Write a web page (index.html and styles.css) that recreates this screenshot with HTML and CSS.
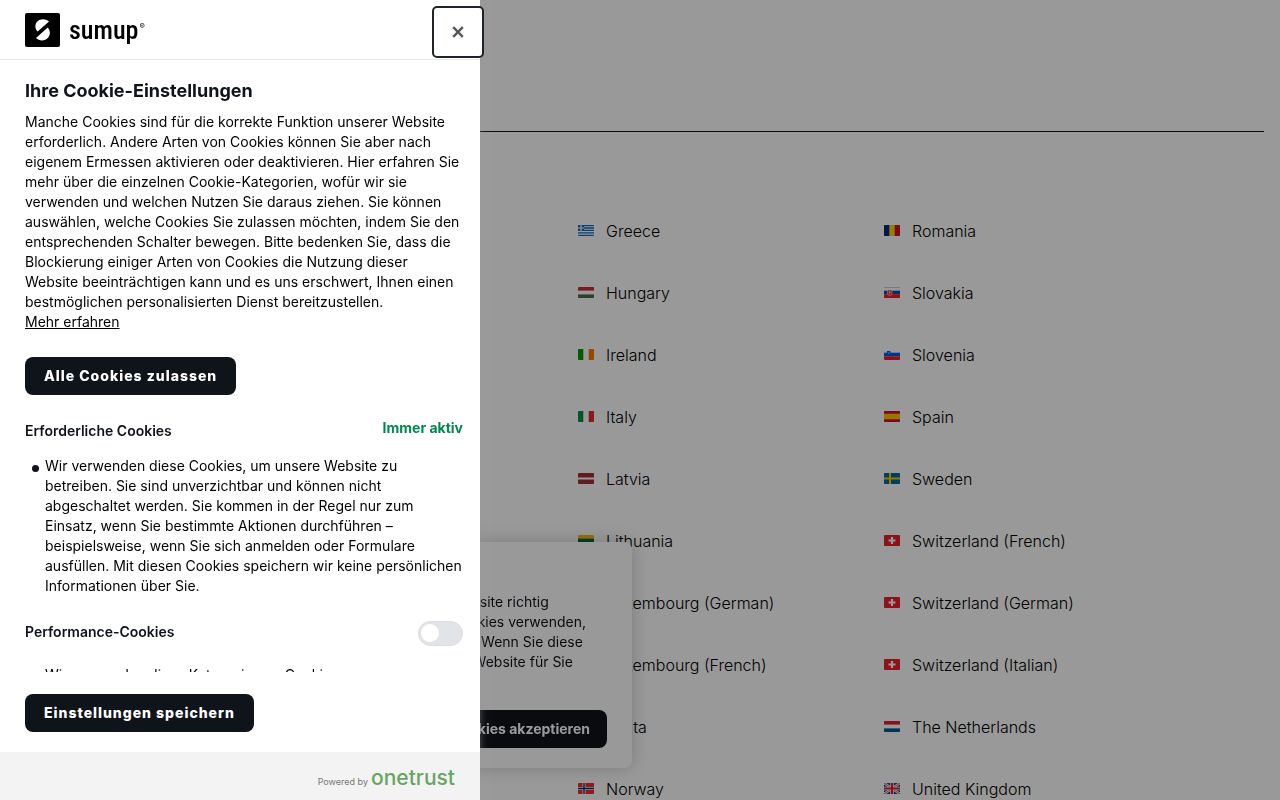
FILE: index.html
```html
<!DOCTYPE html>
<html lang="de">
<head>
    <meta charset="UTF-8">
    <meta name="viewport" content="width=device-width, initial-scale=1.0">
    <title>SumUp</title>
    <link rel="stylesheet" href="styles.css">
</head>
<body>
    <main class="page">
        <hr class="rule">
        <div class="countries">
            <ul class="country-list">
                <li><a href="#"><svg class="flag" viewBox="0 0 16 11"><rect width="16" height="11" fill="#fff"/><path d="M0 .6h16M0 3h16M0 5.4h16M0 7.8h16M0 10.3h16" stroke="#0d6ebf" stroke-width="1.3"/><rect width="6" height="6" fill="#0d6ebf"/><path d="M3 0v6M0 3h6" stroke="#fff" stroke-width="1.2"/></svg>Greece</a></li>
                <li><a href="#"><svg class="flag" viewBox="0 0 16 11"><rect width="16" height="11" fill="#fff"/><rect width="16" height="3.6" fill="#cd2a3e"/><rect y="7.4" width="16" height="3.6" fill="#436f4d"/></svg>Hungary</a></li>
                <li><a href="#"><svg class="flag" viewBox="0 0 16 11"><rect width="16" height="11" fill="#fff"/><rect width="5.3" height="11" fill="#009a00"/><rect x="10.7" width="5.3" height="11" fill="#ff7900"/></svg>Ireland</a></li>
                <li><a href="#"><svg class="flag" viewBox="0 0 16 11"><rect width="16" height="11" fill="#fff"/><rect width="5.3" height="11" fill="#009246"/><rect x="10.7" width="5.3" height="11" fill="#e02b37"/></svg>Italy</a></li>
                <li><a href="#"><svg class="flag" viewBox="0 0 16 11"><rect width="16" height="11" fill="#a2303b"/><rect y="4.5" width="16" height="2" fill="#fff"/></svg>Latvia</a></li>
                <li><a href="#"><svg class="flag" viewBox="0 0 16 11"><rect width="16" height="4" fill="#fdb913"/><rect y="3.7" width="16" height="3.6" fill="#006a44"/><rect y="7.3" width="16" height="3.7" fill="#c1272d"/></svg>Lithuania</a></li>
                <li><a href="#"><svg class="flag" viewBox="0 0 16 11"><rect width="16" height="11" fill="#fff"/><rect width="16" height="3.6" fill="#ed2939"/><rect y="7.4" width="16" height="3.6" fill="#00a1de"/></svg>Luxembourg (German)</a></li>
                <li><a href="#"><svg class="flag" viewBox="0 0 16 11"><rect width="16" height="11" fill="#fff"/><rect width="16" height="3.6" fill="#ed2939"/><rect y="7.4" width="16" height="3.6" fill="#00a1de"/></svg>Luxembourg (French)</a></li>
                <li><a href="#"><svg class="flag" viewBox="0 0 16 11"><rect width="16" height="11" fill="#fff"/><rect x="8" width="8" height="11" fill="#cf142b"/></svg>Malta</a></li>
                <li><a href="#"><svg class="flag" viewBox="0 0 16 11"><rect width="16" height="11" fill="#ef2b2d"/><path d="M6 0v11M0 5.5h16" stroke="#fff" stroke-width="3"/><path d="M6 0v11M0 5.5h16" stroke="#002868" stroke-width="1.3"/></svg>Norway</a></li>
            </ul>
            <ul class="country-list">
                <li><a href="#"><svg class="flag" viewBox="0 0 16 11"><rect width="16" height="11" fill="#fcd116"/><rect width="5.3" height="11" fill="#002b7f"/><rect x="10.7" width="5.3" height="11" fill="#ce1126"/></svg>Romania</a></li>
                <li><a href="#"><svg class="flag" viewBox="0 0 16 11"><rect width="16" height="11" fill="#fff"/><rect y="3.7" width="16" height="3.6" fill="#0b4ea2"/><rect y="7.3" width="16" height="3.7" fill="#ee1c25"/><path d="M0 .3h16" stroke="#8a8bc0" stroke-width=".6"/><path d="M3.4 3h4.6v3q0 2-2.3 2.8Q3.4 8 3.4 6z" fill="#ee1c25" stroke="#fff" stroke-width=".6"/><path d="M5.7 3.8v3.4M4.7 5h2" stroke="#fff" stroke-width=".7"/></svg>Slovakia</a></li>
                <li><a href="#"><svg class="flag" viewBox="0 0 16 11"><rect width="16" height="11" fill="#fff"/><rect y="3.7" width="16" height="3.8" fill="#005ce6"/><rect y="7.5" width="16" height="3.5" fill="#ee1c25"/><path d="M3 2h3.4v2q0 1.3-1.7 2Q3 5.3 3 4z" fill="#005ce6"/><path d="M3.7 4.6l1-1.4 1 1.4z" fill="#fff"/></svg>Slovenia</a></li>
                <li><a href="#"><svg class="flag" viewBox="0 0 16 11"><rect width="16" height="11" fill="#c8102e"/><rect y="2.7" width="16" height="5.6" fill="#ffc400"/></svg>Spain</a></li>
                <li><a href="#"><svg class="flag" viewBox="0 0 16 11"><rect width="16" height="11" fill="#006aa7"/><path d="M6 0v11M0 5.5h16" stroke="#fecc00" stroke-width="2"/></svg>Sweden</a></li>
                <li><a href="#"><svg class="flag" viewBox="0 0 16 11"><rect width="16" height="11" fill="#e8202a"/><path d="M8 2v7M4.5 5.5h7" stroke="#fff" stroke-width="2.2"/></svg>Switzerland (French)</a></li>
                <li><a href="#"><svg class="flag" viewBox="0 0 16 11"><rect width="16" height="11" fill="#e8202a"/><path d="M8 2v7M4.5 5.5h7" stroke="#fff" stroke-width="2.2"/></svg>Switzerland (German)</a></li>
                <li><a href="#"><svg class="flag" viewBox="0 0 16 11"><rect width="16" height="11" fill="#e8202a"/><path d="M8 2v7M4.5 5.5h7" stroke="#fff" stroke-width="2.2"/></svg>Switzerland (Italian)</a></li>
                <li><a href="#"><svg class="flag" viewBox="0 0 16 11"><rect width="16" height="11" fill="#fff"/><rect width="16" height="3.6" fill="#e02030"/><rect y="7.4" width="16" height="3.6" fill="#005b8c"/></svg>The Netherlands</a></li>
                <li><a href="#"><svg class="flag" viewBox="0 0 16 11"><rect width="16" height="11" fill="#213b8f"/><path d="M0 0l16 11M16 0L0 11" stroke="#fff" stroke-width="2.4"/><path d="M0 0l16 11M16 0L0 11" stroke="#d8202f" stroke-width=".8"/><path d="M8 0v11M0 5.5h16" stroke="#fff" stroke-width="3.6"/><path d="M8 0v11M0 5.5h16" stroke="#d8202f" stroke-width="2.2"/></svg>United Kingdom</a></li>
            </ul>
        </div>
    </main>

    <section class="banner">
        <p class="banner-text">Wir möchten sehr gerne Cookies verwenden, damit unsere Website richtig<br>
            funktioniert. Außerdem möchten wir gerne einige optionale Cookies verwenden,<br>
            um unsere Website und auch alle Dienste weiter zu verbessern. Wenn Sie diese<br>
            Cookies akzeptieren, können wir dadurch auch alle Inhalte der Website für Sie<br>
            anpassen.</p>
        <button class="banner-button">Alle Cookies akzeptieren</button>
    </section>

    <div class="overlay"></div>

    <aside class="panel" role="dialog" aria-label="Ihre Cookie-Einstellungen">
        <header class="panel-header">
            <div class="logo">
                <svg class="logo-mark" viewBox="0 0 35 34">
                    <rect width="35" height="34" rx="2"/>
                    <path d="M12.600 18.600C9.600 15.500 9.800 11 12.300 8.600 15.500 5.400 20.500 5.400 24 8.600z" fill="#fff"/>
                    <path d="M22.700 14.600C25.700 17.700 25.500 22.200 23 24.800 19.800 28.200 14.500 28.400 11 25z" fill="#fff"/>
                </svg>
                <span class="logo-text">sumup</span><span class="logo-reg">®</span>
            </div>
            <button class="close" aria-label="Schließen">
                <svg viewBox="0 0 10 10"><path d="M1 1l8 8M9 1L1 9" stroke="#565656" stroke-width="2"/></svg>
            </button>
        </header>

        <div class="panel-content">
            <h1 class="panel-title">Ihre Cookie-Einstellungen</h1>
            <p>Manche Cookies sind für die korrekte Funktion unserer Website erforderlich. Andere Arten von Cookies können Sie aber nach eigenem Ermessen aktivieren oder deaktivieren. Hier erfahren Sie mehr über die einzelnen Cookie-Kategorien, wofür wir sie verwenden und welchen Nutzen Sie daraus ziehen. Sie können auswählen, welche Cookies Sie zulassen möchten, indem Sie den entsprechenden Schalter bewegen. Bitte bedenken Sie, dass die Blockierung einiger Arten von Cookies die Nutzung dieser Website beeinträchtigen kann und es uns erschwert, Ihnen einen bestmöglichen personalisierten Dienst bereitzustellen.<br>
            <a class="more" href="#">Mehr erfahren</a></p>
            <button class="button allow">Alle Cookies zulassen</button>

            <div class="category">
                <h2>Erforderliche Cookies</h2>
                <span class="always">Immer aktiv</span>
            </div>
            <ul class="details">
                <li>Wir verwenden diese Cookies, um unsere Website zu betreiben. Sie sind unverzichtbar und können nicht abgeschaltet werden. Sie kommen in der Regel nur zum Einsatz, wenn Sie bestimmte Aktionen durchführen – beispielsweise, wenn Sie sich anmelden oder Formulare ausfüllen. Mit diesen Cookies speichern wir keine persönlichen Informationen über Sie.</li>
            </ul>

            <div class="category optional">
                <h2><label for="performance">Performance-Cookies</label></h2>
                <input class="switch" type="checkbox" id="performance">
            </div>
            <ul class="details">
                <li>Wir verwenden diese Kategorie von Cookies</li>
            </ul>
        </div>

        <div class="panel-actions">
            <button class="button">Einstellungen speichern</button>
        </div>
        <footer class="powered">
            <span>Powered by</span>
            <a class="onetrust" href="#">onetrust</a>
        </footer>
    </aside>
</body>
</html>
```

FILE: styles.css
```css
* {
    margin: 0;
    padding: 0;
    box-sizing: border-box;
}

body {
    height: 100vh;
    overflow: hidden;
    background: #fff;
    color: #0f131a;
    font-family: Inter, "Liberation Sans", sans-serif;
    font-size: 14px;
    line-height: 20px;
}

button {
    border: none;
    font-family: inherit;
    cursor: pointer;
}

ul {
    list-style: none;
}

/* Country selection */
.page {
    padding: 131px 16px 0;
}

.rule {
    border: none;
    border-top: 1px solid #0f131a;
}

.countries {
    display: grid;
    grid-template-columns: 1fr 1fr;
    margin: 68px 74px 0 562px;
}

.country-list a {
    display: flex;
    align-items: center;
    gap: 12px;
    height: 62px;
    color: #000;
    font-size: 16px;
    font-weight: 300;
    line-height: 24px;
    text-decoration: none;
}

.flag {
    width: 16px;
    height: 11px;
    margin-bottom: 1px;
    border-radius: 1px;
}

/* Cookie banner */
.banner {
    position: fixed;
    left: 32px;
    bottom: 32px;
    width: 600px;
    padding: 50px 25px 20px;
    display: flex;
    flex-direction: column;
    gap: 18px;
    background: #fff;
    border-radius: 8px;
    box-shadow: 0 0 18px rgba(0, 0, 0, 0.2);
}

.banner-text {
    white-space: nowrap;
}

.banner-button {
    align-self: flex-end;
    height: 38px;
    padding: 0 17px 2px;
    background: #0f131a;
    border-radius: 8px;
    color: #fff;
    font-size: 14px;
    font-weight: 700;
}

.overlay {
    position: fixed;
    inset: 0;
    background: rgba(0, 0, 0, 0.4);
}

/* Preference panel */
.panel {
    position: fixed;
    top: 0;
    bottom: 0;
    left: 0;
    width: 480px;
    max-width: 100%;
    display: flex;
    flex-direction: column;
    background: #fff;
    color: #000;
    box-shadow: 0 2px 10px -3px #999;
}

.panel-header {
    height: 60px;
    padding-left: 25px;
    display: flex;
    justify-content: space-between;
    align-items: center;
    border-bottom: 1px solid #e9e9e9;
}

.logo {
    display: flex;
    align-items: center;
}

.logo-mark {
    width: 35px;
    height: 34px;
    margin-right: 9px;
}

.logo-text {
    color: #000;
    font-family: "Liberation Sans Narrow", "Roboto Condensed", Roboto, sans-serif;
    font-size: 26px;
    font-weight: 500;
    line-height: 32px;
}

.logo-reg {
    align-self: flex-start;
    margin: 3px 0 0 1px;
    font-size: 8px;
}

.close {
    width: 52px;
    height: 52px;
    margin: 5px -4px 0 0;
    display: flex;
    justify-content: center;
    align-items: center;
    background: #fff;
    border: 2px solid #1f242b;
    border-radius: 5px;
}

.close svg {
    width: 12px;
    height: 12px;
}

.panel-content {
    flex: 1;
    min-height: 0;
    overflow: hidden;
    padding: 19px 17px 0 25px;
}

.panel-title {
    margin-bottom: 9px;
    color: #0f131a;
    font-size: 18px;
    font-weight: 700;
    line-height: 24px;
}

.more {
    color: inherit;
}

.button {
    height: 38px;
    padding: 0 19px 2px;
    background: #0f131a;
    border-radius: 8px;
    color: #fff;
    font-size: 14px;
    font-weight: 800;
    letter-spacing: 1px;
}

.allow {
    display: block;
    margin: 25px 0 23px;
}

.category {
    display: flex;
    justify-content: space-between;
    height: 38px;
}

.optional {
    height: 46px;
}

.category h2 {
    padding-top: 3px;
    color: #0f131a;
    font-size: 14px;
    font-weight: 600;
    line-height: 20px;
}

.always {
    color: #008850;
    font-weight: 700;
}

.switch {
    appearance: none;
    width: 45px;
    height: 25px;
    margin-top: 2px;
    padding: 2px;
    background: #e1e5e9;
    border: 1px solid #ddd;
    border-radius: 20px;
    cursor: pointer;
}

.switch::before {
    content: "";
    display: block;
    width: 18px;
    height: 18px;
    background: #fff;
    border-radius: 50%;
}

.switch:checked::before {
    margin-left: auto;
}

.details {
    margin-bottom: 23px;
    padding-left: 20px;
}

.details li {
    position: relative;
}

.details li::before {
    content: "";
    position: absolute;
    top: 9px;
    left: -13px;
    width: 7px;
    height: 7px;
    background: #0f131a;
    border-radius: 50%;
}

.panel-actions {
    padding: 22px 25px 20px;
}

.powered {
    height: 48px;
    padding-right: 25px;
    display: flex;
    justify-content: flex-end;
    align-items: baseline;
    gap: 3px;
    background: #f3f3f3;
    color: #777;
    font-size: 9px;
    line-height: 52px;
}

.onetrust {
    color: #6aa465;
    font-size: 21px;
    font-weight: 500;
    text-decoration: none;
}
```
